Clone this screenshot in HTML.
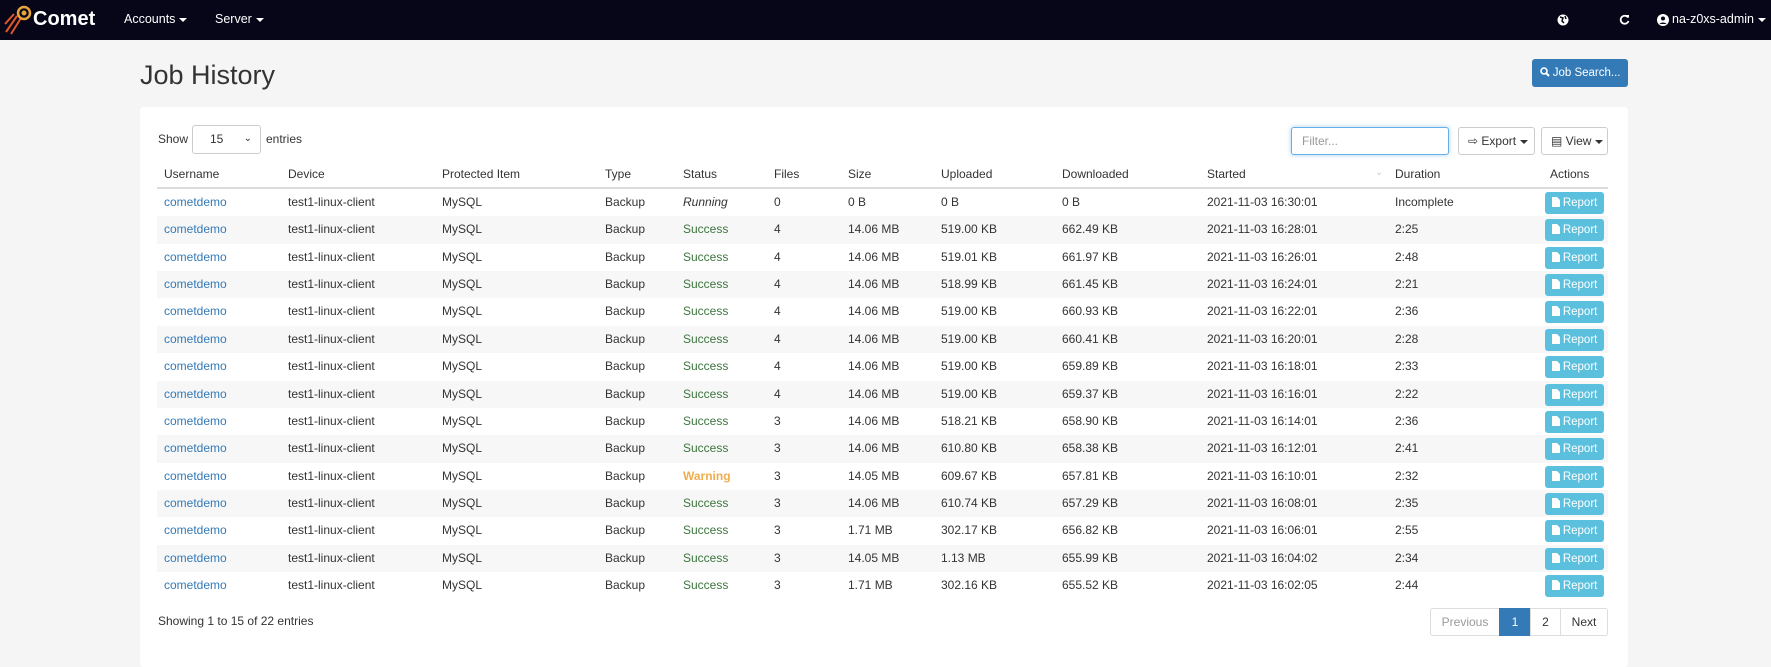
<!DOCTYPE html>
<html><head><meta charset="utf-8"><style>
*{box-sizing:border-box;margin:0;padding:0}
body{width:1771px;height:652px;overflow:hidden;background:#f5f5f5;font-family:"Liberation Sans",sans-serif;font-size:12px;color:#333;position:relative}
.nav{position:absolute;left:0;top:0;width:1771px;height:40px;background:#060618;color:#fff}
.nav span{position:absolute;top:12px;font-size:12.5px}
.caret{display:inline-block;width:0;height:0;border-left:4px solid transparent;border-right:4px solid transparent;border-top:4px solid currentColor;vertical-align:middle;margin-left:4px}
.abs{position:absolute}
h1{position:absolute;left:140px;top:60px;font-size:27px;font-weight:normal;color:#333}
.btnp{position:absolute;left:1532px;top:59px;width:96px;height:28px;background:#337ab7;border-radius:3px;color:#fff;font-size:11.5px;text-align:center;line-height:28px}
.panel{position:absolute;left:140px;top:107px;width:1488px;height:560px;background:#fff;border-radius:4px}
.box{position:absolute;border:1px solid #ccc;border-radius:3px;background:#fff;font-size:12px;line-height:26px}
.row{position:absolute;left:157px;width:1451px;height:27.36px}
.row.g{background:#f7f7f7}
.c{position:absolute;top:6px;font-size:12px}
.rep{position:absolute;left:1388px;top:3px;width:59px;height:22px;background:#5bc0de;border-radius:3px;color:#fff;font-size:11.5px;line-height:22px;text-align:center}
.pg{position:absolute;top:608px;height:28px;border:1px solid #ddd;line-height:26px;text-align:center;font-size:12px;background:#fff}
</style></head><body>
<div class="nav">
<svg class="abs" style="left:3px;top:4px" width="30" height="32" viewBox="0 0 30 32"><g stroke="#e0572a" stroke-width="2" fill="none"><line x1="14" y1="12" x2="3" y2="28"/><line x1="18" y1="14" x2="8" y2="30"/><line x1="11" y1="10" x2="2" y2="20"/></g><circle cx="21" cy="9" r="6" stroke="#e8a33a" stroke-width="2.5" fill="none"/><circle cx="21" cy="9" r="2.5" fill="#e8a33a"/></svg>
<span style="left:33px;top:8px;font-size:20px;font-weight:bold">Comet</span>
<span style="left:124px">Accounts<i class="caret"></i></span>
<span style="left:215px">Server<i class="caret"></i></span>
<svg class="abs" style="left:1557px;top:14px" width="12" height="12" viewBox="0 0 12 12"><circle cx="6" cy="6" r="5.5" fill="#fff"/><path d="M3 3l3 1-1 3 2 2M8 2l1 3" stroke="#060618" stroke-width="1.5" fill="none"/></svg>
<svg class="abs" style="left:1619px;top:14px" width="11" height="11" viewBox="0 0 11 11"><path d="M9 3.5A4 4 0 1 0 9.5 7" stroke="#fff" stroke-width="1.8" fill="none"/><path d="M7 1h3v3z" fill="#fff"/></svg>
<svg class="abs" style="left:1657px;top:14px" width="12" height="12" viewBox="0 0 12 12"><circle cx="6" cy="6" r="6" fill="#fff"/><circle cx="6" cy="4.5" r="2" fill="#060618"/><path d="M2.5 10a4 3 0 0 1 7 0" fill="#060618"/></svg>
<span style="left:1672px">na-z0xs-admin<i class="caret"></i></span>
</div>
<h1>Job History</h1>
<div class="btnp"><svg width="10" height="10" viewBox="0 0 10 10" style="vertical-align:-1px"><circle cx="4" cy="4" r="3" stroke="#fff" stroke-width="1.6" fill="none"/><line x1="6" y1="6" x2="9" y2="9" stroke="#fff" stroke-width="2"/></svg> Job Search...</div>
<div class="panel"></div>
<span class="abs" style="left:158px;top:132px">Show</span>
<div class="box" style="left:192px;top:125px;width:69px;height:29px;padding-left:17px">15<span style="position:absolute;right:8px;top:0;font-size:10px">&#8964;</span></div>
<span class="abs" style="left:266px;top:132px">entries</span>
<div class="box" style="left:1291px;top:127px;width:158px;height:28px;border-color:#66afe9;box-shadow:0 0 5px rgba(102,175,233,.6);color:#999;padding-left:10px">Filter...</div>
<div class="box" style="left:1458px;top:127px;width:77px;height:28px;padding-left:9px">&#8680; Export<i class="caret"></i></div>
<div class="box" style="left:1541px;top:127px;width:67px;height:28px;padding-left:9px">&#9636; View<i class="caret"></i></div>
<div class="row" style="top:161px;border-bottom:2px solid #ddd;height:28px">
<span class="c" style="left:7px">Username</span><span class="c" style="left:131px">Device</span><span class="c" style="left:285px">Protected Item</span><span class="c" style="left:448px">Type</span><span class="c" style="left:526px">Status</span><span class="c" style="left:617px">Files</span><span class="c" style="left:691px">Size</span><span class="c" style="left:784px">Uploaded</span><span class="c" style="left:905px">Downloaded</span><span class="c" style="left:1050px">Started</span><span class="c" style="left:1218px;color:#ccc;font-size:10px">&#8964;</span><span class="c" style="left:1238px">Duration</span><span class="c" style="left:1393px">Actions</span>
</div>
<div id="rows"></div>
<span class="abs" style="left:158px;top:614px">Showing 1 to 15 of 22 entries</span>
<div class="pg" style="left:1430px;width:70px;color:#999;border-radius:3px 0 0 3px">Previous</div>
<div class="pg" style="left:1499px;width:32px;background:#337ab7;border-color:#337ab7;color:#fff">1</div>
<div class="pg" style="left:1530px;width:31px">2</div>
<div class="pg" style="left:1560px;width:48px;border-radius:0 3px 3px 0">Next</div>
<script>
var d=[["Running","0","0 B","0 B","0 B","16:30:01","Incomplete"],["Success","4","14.06 MB","519.00 KB","662.49 KB","16:28:01","2:25"],["Success","4","14.06 MB","519.01 KB","661.97 KB","16:26:01","2:48"],["Success","4","14.06 MB","518.99 KB","661.45 KB","16:24:01","2:21"],["Success","4","14.06 MB","519.00 KB","660.93 KB","16:22:01","2:36"],["Success","4","14.06 MB","519.00 KB","660.41 KB","16:20:01","2:28"],["Success","4","14.06 MB","519.00 KB","659.89 KB","16:18:01","2:33"],["Success","4","14.06 MB","519.00 KB","659.37 KB","16:16:01","2:22"],["Success","3","14.06 MB","518.21 KB","658.90 KB","16:14:01","2:36"],["Success","3","14.06 MB","610.80 KB","658.38 KB","16:12:01","2:41"],["Warning","3","14.05 MB","609.67 KB","657.81 KB","16:10:01","2:32"],["Success","3","14.06 MB","610.74 KB","657.29 KB","16:08:01","2:35"],["Success","3","1.71 MB","302.17 KB","656.82 KB","16:06:01","2:55"],["Success","3","14.05 MB","1.13 MB","655.99 KB","16:04:02","2:34"],["Success","3","1.71 MB","302.16 KB","655.52 KB","16:02:05","2:44"]];
var ic='<svg width="8" height="10" viewBox="0 0 8 10" style="vertical-align:-1px"><path d="M0 0h5l3 3v7H0z" fill="#fff"/></svg>';
var h="";d.forEach(function(r,i){var st=r[0]=="Running"?'font-style:italic':r[0]=="Warning"?'color:#f0ad4e;font-weight:bold':'color:#3c763d';
h+='<div class="row'+(i%2?' g':'')+'" style="top:'+(189+i*27.36)+'px"><span class="c" style="left:7px;color:#337ab7">cometdemo</span><span class="c" style="left:131px">test1-linux-client</span><span class="c" style="left:285px">MySQL</span><span class="c" style="left:448px">Backup</span><span class="c" style="left:526px;'+st+'">'+r[0]+'</span><span class="c" style="left:617px">'+r[1]+'</span><span class="c" style="left:691px">'+r[2]+'</span><span class="c" style="left:784px">'+r[3]+'</span><span class="c" style="left:905px">'+r[4]+'</span><span class="c" style="left:1050px">2021-11-03 '+r[5]+'</span><span class="c" style="left:1238px">'+r[6]+'</span><div class="rep">'+ic+' Report</div></div>';});
document.getElementById("rows").innerHTML=h;
</script>
</body></html>
